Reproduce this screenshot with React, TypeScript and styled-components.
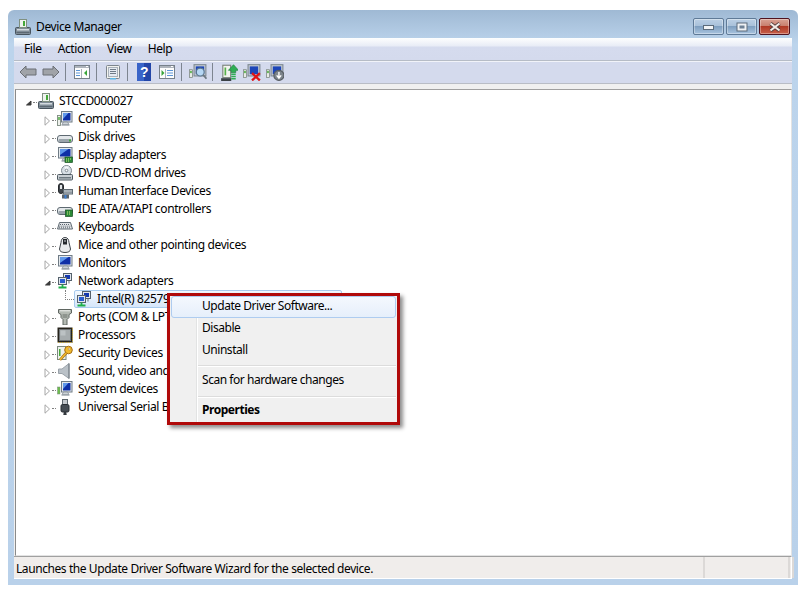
import React from "react";
import styled, { createGlobalStyle } from "styled-components";

const Global = createGlobalStyle`
  html, body {
    margin: 0;
    background: #fff;
    font-family: "Noto Sans", "Open Sans", sans-serif;
    font-size: 12px;
    letter-spacing: -0.38px;
    color: #000;
  }
`;

const Win = styled.div`
  width: 790px;
  height: 575px;
  margin: 10px 0 0 8px;
  padding: 0 6px 6px;
  box-sizing: border-box;
  display: flex;
  flex-direction: column;
  border-radius: 6px 6px 0 0;
  background: linear-gradient(180deg, #9fb9d4 0, #bcd4ec 34px, #b9d1ea 100%);
`;

const TitleBar = styled.div`
  height: 28px;
  flex: none;
  display: flex;
  align-items: center;
  gap: 5px;
  padding: 6px 2px 0 1px;
  box-sizing: border-box;
`;

const TitleText = styled.span`
  flex: 1;
  line-height: 16px;
`;

const Caption = styled.div`
  display: flex;
  gap: 2px;
  align-self: flex-start;
  margin-top: 2px;
`;

const CaptionBtn = styled.div<{ $close?: boolean }>`
  width: 31px;
  height: 17px;
  box-sizing: border-box;
  border-radius: 2px;
  display: flex;
  align-items: center;
  justify-content: center;
  border: 1px solid ${(p) => (p.$close ? "#50131f" : "#5f7a97")};
  box-shadow: inset 0 0 0 1px rgba(255, 255, 255, 0.35);
  background: ${(p) =>
    p.$close
      ? "linear-gradient(180deg, #d9a294 0, #c9806f 45%, #b03a26 50%, #c8604a 100%)"
      : "linear-gradient(180deg, #bcd0e5 0, #a9c1da 45%, #7f9fc0 50%, #a9c4df 100%)"};
`;

const Client = styled.div`
  flex: 1;
  display: flex;
  flex-direction: column;
  background: #f0f0f0;
  min-height: 0;
`;

const MenuBar = styled.div`
  height: 22px;
  flex: none;
  display: flex;
  padding-left: 2px;
  background: linear-gradient(180deg, #fdfefe 0, #e8ecf6 8px, #d5dbee 9px, #d4daed 100%);
  border-bottom: 1px solid #b6bcc6;
`;

const MenuEntry = styled.span`
  padding: 0 8px;
  line-height: 22px;
`;

const ToolBar = styled.div`
  height: 22px;
  flex: none;
  display: flex;
  align-items: center;
  padding-left: 2px;
  background: #d4daed;
  box-shadow: inset 0 1px 0 #f1f3f9;
  border-bottom: 1px solid #b9bdc6;
`;

const ToolSlot = styled.div`
  width: 23px;
  height: 22px;
  display: flex;
  align-items: center;
  justify-content: center;
`;

const ToolSep = styled.div`
  width: 1px;
  height: 18px;
  margin: 0 4px 0 3px;
  background: #7d8590;
`;

const TreePanel = styled.div`
  position: relative;
  flex: 1;
  margin: 5px 0 0 1px;
  padding-top: 2px;
  background: #fff;
  border-top: 1px solid #a0a0a0;
  border-left: 1px solid #8a8a8a;
  border-right: 1px solid #e3e3e3;
  border-bottom: 1px solid #e3e3e3;
`;

const Row = styled.div<{ $depth: number }>`
  height: 18px;
  display: flex;
  align-items: center;
  padding-left: ${(p) => 8 + p.$depth * 19}px;
`;

const Expander = styled.div`
  width: 8px;
  height: 18px;
  flex: none;
  display: flex;
  align-items: center;
  padding-top: 3px;
  box-sizing: border-box;
`;

const Dots = styled.div`
  width: 4px;
  margin: 2px 1px 0;
  flex: none;
  border-top: 1px dotted #808080;
`;

const Elbow = styled.div`
  position: absolute;
  left: 49px;
  top: 200px;
  width: 8px;
  height: 9px;
  border-left: 1px dotted #808080;
  border-bottom: 1px dotted #808080;
`;

const Label = styled.span`
  margin-left: 5px;
  line-height: 16px;
  white-space: nowrap;
`;

const Selected = styled.div`
  display: flex;
  align-items: center;
  height: 18px;
  width: 268px;
  margin-left: 12px;
  padding-left: 1px;
  box-sizing: border-box;
  border: 1px solid #a8cbee;
  border-radius: 2px;
  background: linear-gradient(180deg, #f4f9fe 0, #d6e6fa 100%);
`;

const Context = styled.div`
  position: absolute;
  left: 151px;
  top: 203px;
  width: 233px;
  height: 132px;
  box-sizing: border-box;
  border: 3px solid #b00a0a;
  padding: 0 1px;
  box-shadow: 3px 3px 4px rgba(0, 0, 0, 0.45);
  background: linear-gradient(90deg, #f0f0f0 0, #f0f0f0 26px, #e2e3e3 26px, #e2e3e3 27px, #fff 27px, #fff 28px, #f0f0f0 28px);
`;

const ContextItem = styled.div<{ $active?: boolean; $bold?: boolean }>`
  height: 22px;
  line-height: 18px;
  box-sizing: border-box;
  padding-left: 30px;
  border: 1px solid ${(p) => (p.$active ? "#aeccf0" : "transparent")};
  border-radius: 3px;
  letter-spacing: -0.46px;
  font-weight: ${(p) => (p.$bold ? 700 : 400)};
  background: ${(p) => (p.$active ? "linear-gradient(180deg, #f4f8fe 0, #e6effb 100%)" : "none")};
`;

const ContextSep = styled.div<{ $low?: boolean }>`
  margin: ${(p) => (p.$low ? "4px 0 2px 27px" : "3px 0 3px 27px")};
  height: 2px;
  box-sizing: border-box;
  border-top: 1px solid #dcdcdc;
  border-bottom: 1px solid #fff;
`;

const Status = styled.div`
  height: 21px;
  flex: none;
  display: flex;
  background: #f0edeb;
  border-top: 1px solid #a0a0a0;
  border-bottom: 1px solid #fff;
  border-right: 1px solid #fff;
`;

const StatusCell = styled.div<{ $w?: number }>`
  ${(p) => (p.$w ? `width: ${p.$w}px; flex: none;` : "flex: 1;")}
  padding-left: 2px;
  line-height: 23px;
  letter-spacing: -0.42px;
  border-right: 2px solid #dcd9d7;
  box-sizing: border-box;
`;

const Open = () => (
  <svg width="8" height="10" viewBox="0 0 8 10"><path d="M2 .8v8.400l4.500-4.200z" fill="#fff" stroke="#a6a6a6" /></svg>
);
const Shut = () => (
  <svg width="8" height="8" viewBox="0 0 8 8"><path d="M7 2v4H2.500z" fill="#3c3c3c" stroke="#3c3c3c" /></svg>
);

type IconProps = { size?: number };
const Ico = ({ children, size = 16 }: IconProps & { children: React.ReactNode }) => (
  <svg width={size} height={size} viewBox="0 0 16 16" style={{ flex: "none" }}>{children}</svg>
);

const Stack = () => (
  <>
    <rect x=".5" y="8.500" width="15" height="7" rx="1" fill="#7f8c97" stroke="#48545e" />
    <rect x="2" y="10" width="12" height="1.500" fill="#d3dadf" />
    <rect x="1.500" y="13" width="13" height="1" fill="#5c6872" />
    <rect x="4.500" y=".5" width="7" height="8" fill="#eef3ee" stroke="#7f9080" />
    <rect x="8" y="2" width="2" height="5" fill="#46a83a" />
  </>
);
const Screen = ({ small }: { small?: boolean }) => {
  const x = small ? 4 : 1;
  const w = small ? 11.500 : 14.500;
  return (
    <>
      <rect x={x + 0.5} y=".5" width={w - 1} height="10.500" fill="#e4e9ed" stroke="#6f7b85" />
      <rect x={x + 2} y="2" width={w - 4} height="7.500" fill="#0f2fa6" />
      <path d={`M${x + 2} 2h${w - 6}l-${w - 6} 6z`} fill="#5f97ea" />
      <path d="M6.500 11h4l1.500 2.500H5z" fill="#cdd3d8" stroke="#7e8890" strokeWidth=".7" />
      <rect x="4.500" y="13.500" width="8" height="1.200" fill="#9aa3aa" />
    </>
  );
};
const Tower = () => (
  <>
    <rect x=".5" y="4.500" width="3" height="10" fill="#eef1ec" stroke="#7d8a80" strokeWidth=".9" />
    <rect x="1.300" y="6" width="1.400" height="3" fill="#46a83a" />
  </>
);
const Board = () => (
  <>
    <rect x="8" y="10" width="7.500" height="5.500" fill="#2a8a36" stroke="#174f22" strokeWidth=".7" />
    <path d="M9 12h1m1 0h1m1 0h1M9 14h1m1 0h1" stroke="#d3e68a" />
  </>
);
const Drive = () => (
  <>
    <rect x=".5" y="6.500" width="15" height="7" rx="2.500" fill="#e3e7ea" stroke="#5f6a72" />
    <rect x="1.500" y="10" width="13" height="3" rx="1" fill="#9aa4ab" />
    <rect x="12" y="10.500" width="2" height="2" fill="#43a83a" />
  </>
);
const Net = () => (
  <>
    <rect x="6.500" y=".5" width="8" height="7" fill="#e0e6ec" stroke="#55616c" />
    <rect x="8" y="2" width="5" height="4" fill="#1338b0" />
    <rect x="1.500" y="4.500" width="8" height="7" fill="#e0e6ec" stroke="#55616c" />
    <rect x="3" y="6" width="5" height="4" fill="#2b5fd0" />
    <path d="M5.500 11.500v2.500M1.500 14.500h8" stroke="#1fb04a" strokeWidth="1.800" fill="none" />
    <path d="M12 7.500v3" stroke="#5d6a76" />
  </>
);

const icons: Record<string, React.ReactNode> = {
  root: <Stack />,
  computer: (<><Tower /><Screen small /></>),
  disk: <Drive />,
  display: (<><Screen /><Board /></>),
  dvd: (
    <>
      <circle cx="9.500" cy="5.500" r="5" fill="#d8dfe6" stroke="#7f8992" />
      <path d="M9.500 5.500L7 1.500h5z" fill="#f4f7fa" />
      <circle cx="9.500" cy="5.500" r="1.300" fill="#fff" stroke="#7f8992" />
      <rect x=".5" y="9.500" width="15" height="5.500" rx="1" fill="#c8ced3" stroke="#4f5a62" />
      <rect x="2" y="12" width="12" height="1.500" fill="#6f7a82" />
    </>
  ),
  hid: (
    <>
      <rect x="1.500" y=".5" width="5" height="10" rx="2.500" fill="#41474c" stroke="#25282b" />
      <rect x="3" y="2" width="2" height="4" fill="#e3e6e8" />
      <rect x="6.500" y="6.500" width="9" height="4.500" fill="#c8cfd5" stroke="#5f6a72" />
      <path d="M7.500 8h7M7.500 9.600h7" stroke="#4d5862" strokeDasharray="1 1" />
      <rect x="5" y="11.500" width="7" height="4" fill="#59636c" />
      <rect x="7.500" y="12" width="2" height="3.500" fill="#3f7fd0" />
    </>
  ),
  ide: (
    <>
      <Drive />
      <rect x="8.500" y="9" width="7" height="6.500" fill="#2a8a36" stroke="#174f22" strokeWidth=".7" />
      <path d="M10 11h1m1 0h1M10 13h1m1 0h1" stroke="#d3e68a" />
    </>
  ),
  keyboard: (
    <>
      <path d="M2.500 3.500h11l2 6.500H.5z" fill="#e3e6e9" stroke="#5f6a72" />
      <path d="M3 5.500h10M2.300 7.200h11.400M2 8.800h12" stroke="#5a646c" strokeDasharray="1 1" />
    </>
  ),
  mouse: (
    <>
      <path d="M8 .5c3 0 3.800 2.500 4 5l1.500 6.500c0 2.500-2.500 3.500-5.500 3.500s-5.500-1-5.500-3.500L4 5.500c.2-2.500 1-5 4-5z" fill="#e8eaec" stroke="#3d4349" />
      <path d="M6 2h4v5.500H6z" fill="#24282c" />
      <path d="M7.500 3h1v2h-1z" fill="#c8ced3" />
    </>
  ),
  monitor: <Screen />,
  network: <Net />,
  ports: (
    <>
      <path d="M1.500 .5h13v3.500l-2.500 1.500v3L10 10.500V16H6v-5.500L4 8.500v-3L1.500 4z" fill="#b4bab3" stroke="#5f6661" />
      <path d="M3 1.800h10" stroke="#eef1ee" />
      <path d="M5.500 6h5M5.500 8h5" stroke="#6a716b" />
    </>
  ),
  cpu: (
    <>
      <rect x=".5" y=".5" width="15" height="15" fill="#26231b" />
      <rect x="2.500" y="2.500" width="11" height="11" fill="#a6acae" stroke="#6d7274" />
      <rect x="3.500" y="3.500" width="5" height="5" fill="#bcc2c4" />
      <path d="M15.500 1v14.500H1" fill="none" stroke="#c4a63c" strokeDasharray="1 1" />
    </>
  ),
  security: (
    <>
      <rect x=".5" y="1.500" width="8.500" height="13" fill="#eef1ec" stroke="#7d8a80" />
      <rect x="2" y="4" width="1.500" height="7" fill="#46a83a" />
      <circle cx="11.500" cy="5" r="3.800" fill="#f2bb2e" stroke="#a36d14" />
      <circle cx="12.200" cy="4" r="1" fill="#fff" stroke="#a36d14" strokeWidth=".5" />
      <path d="M9.200 8L3 14.800" stroke="#a36d14" strokeWidth="2.600" />
      <path d="M9.200 8L3 14.800" stroke="#f2bb2e" strokeWidth="1.400" />
    </>
  ),
  sound: (
    <>
      <path d="M1.500 6h3.500L12 .5v15L5 10.500H1.500z" fill="#bac1c7" stroke="#9aa2a9" />
      <path d="M12 .5v15" stroke="#6f777e" />
    </>
  ),
  system: (
    <>
      <rect x=".5" y="6" width="2.500" height="7" fill="#6cc04a" stroke="#7d8a80" strokeWidth=".5" />
      <Screen small />
    </>
  ),
  usb: (
    <>
      <rect x="5.500" y=".5" width="5" height="5.500" fill="#c4c9cd" stroke="#5d666d" />
      <rect x="4" y="5.500" width="8" height="7.500" rx="1.500" fill="#454c53" stroke="#292e33" />
      <path d="M6.800 13h2.400l.5 3H6.300z" fill="#32383d" />
    </>
  ),
};

const Arrow = ({ dir }: { dir: "l" | "r" }) => (
  <svg width="18" height="14" viewBox="0 0 18 14">
    <path
      d={dir === "l" ? "M1 7l6-6v3h10v6H7v3z" : "M17 7l-6-6v3H1v6h10v3z"}
      fill="#a0a3a8"
      stroke="#6b6f75"
      strokeLinejoin="round"
    />
  </svg>
);

const PaneIcon = ({ flip }: { flip?: boolean }) => (
  <Ico>
    <rect x=".5" y="1.500" width="15" height="13" fill="#fdfdfd" stroke="#77808a" />
    <rect x="1" y="2" width="14" height="2" fill="#aeb4bc" />
    <path d="M12 2.500h2" stroke="#fff" />
    {flip ? (
      <>
        <path d="M6.500 5v9" stroke="#a9b1ba" />
        <path d="M2.500 6l3 3-3 3z" fill="#3aa53a" />
        <path d="M8 6.500h6M8 9h6M8 11.500h6" stroke="#5c95d6" />
      </>
    ) : (
      <>
        <path d="M2 6.500h4M2 9h4M2 11.500h4" stroke="#5c95d6" />
        <path d="M7.500 5v9" stroke="#a9b1ba" />
        <path d="M13 6l-3 3 3 3z" fill="#3aa53a" />
      </>
    )}
  </Ico>
);

const SheetIcon = () => (
  <Ico>
    <rect x="1.500" y="1.500" width="13" height="13" rx="1" fill="#f2f2ee" stroke="#7d858d" />
    <rect x="3.500" y="3.500" width="9" height="9" fill="#e6ebf2" stroke="#a9b1ba" />
    <path d="M5 5.500h6M5 7.500h6M5 9.500h6" stroke="#6f7a87" />
    <rect x="5" y="14" width="6" height="1.500" fill="#5fb7e6" />
  </Ico>
);

const HelpIcon = () => (
  <svg width="14" height="18" viewBox="0 0 14 18">
    <rect width="14" height="18" fill="#2346a8" />
    <rect x="0" y="0" width="7" height="18" fill="#3a64c8" />
    <text x="7" y="14" textAnchor="middle" fontSize="14" fontWeight="700" fill="#fff" fontFamily="Liberation Sans, sans-serif">?</text>
  </svg>
);

const ToolScreen = ({ children }: { children: React.ReactNode }) => (
  <Ico size={18}>
    <rect x=".5" y="6" width="2.500" height="7" fill="#e8ece6" stroke="#6f7a70" strokeWidth=".6" />
    <rect x="1" y="7" width="1.500" height="2" fill="#58b04a" />
    <rect x="4.500" y="1.500" width="10.500" height="10" fill="#c9ced3" stroke="#7e8a94" />
    <rect x="6" y="3" width="7.500" height="7" fill="#1d46b8" />
    {children}
  </Ico>
);

const ScanIcon = () => (
  <ToolScreen>
    <circle cx="10" cy="8" r="3.500" fill="#b6d7f4" stroke="#58758e" />
    <path d="M12.500 10.500L15.500 14" stroke="#6c7780" strokeWidth="1.500" />
  </ToolScreen>
);
const RemoveIcon = () => (
  <ToolScreen>
    <path d="M8 9l7 6.500M15 9l-7 6.500" stroke="#e01414" strokeWidth="2" />
  </ToolScreen>
);
const DownIcon = () => (
  <ToolScreen>
    <circle cx="11.500" cy="11" r="4.500" fill="#7d858c" stroke="#565c62" />
    <path d="M11.500 8v5M9.500 11l2 2.500 2-2.500" stroke="#fff" fill="none" strokeWidth="1.200" />
  </ToolScreen>
);
const UpdateIcon = () => (
  <Ico size={18}>
    <rect x="2.500" y="2" width="7" height="11" fill="#f2f4ee" stroke="#7c857c" />
    <rect x="4" y="4" width="1.500" height="7" fill="#58b04a" />
    <path d="M1 13.500h9v2.500H1z" fill="#3b4146" />
    <path d="M12 1.500l4.500 5H14v2h-4v-2H7.500z" fill="#2fae55" stroke="#1c7e3a" strokeWidth=".6" />
    <path d="M10 10h4M10 12h4M10 14h4" stroke="#2fae55" strokeWidth="1.200" />
  </Ico>
);

const Glyph = ({ kind }: { kind: string }) => <Ico>{icons[kind]}</Ico>;

const devices: { id: string; text: string; open?: boolean }[] = [
  { id: "computer", text: "Computer" },
  { id: "disk", text: "Disk drives" },
  { id: "display", text: "Display adapters" },
  { id: "dvd", text: "DVD/CD-ROM drives" },
  { id: "hid", text: "Human Interface Devices" },
  { id: "ide", text: "IDE ATA/ATAPI controllers" },
  { id: "keyboard", text: "Keyboards" },
  { id: "mouse", text: "Mice and other pointing devices" },
  { id: "monitor", text: "Monitors" },
  { id: "network", text: "Network adapters", open: true },
  { id: "ports", text: "Ports (COM & LPT)" },
  { id: "cpu", text: "Processors" },
  { id: "security", text: "Security Devices" },
  { id: "sound", text: "Sound, video and game controllers" },
  { id: "system", text: "System devices" },
  { id: "usb", text: "Universal Serial Bus controllers" },
];

const App = () => (
  <>
    <Global />
    <Win>
      <TitleBar>
        <Glyph kind="root" />
        <TitleText>Device Manager</TitleText>
        <Caption>
          <CaptionBtn>
            <svg width="12" height="6" viewBox="0 0 12 6"><rect x=".5" y="1.500" width="10" height="4" fill="#f2f4f6" stroke="#5c6b7a" /></svg>
          </CaptionBtn>
          <CaptionBtn>
            <svg width="12" height="10" viewBox="0 0 12 10"><rect x="1" y="1" width="10" height="8" fill="#eef1f4" stroke="#5c6b7a" /><rect x="3.500" y="3.500" width="5" height="3" fill="#6f8296" /></svg>
          </CaptionBtn>
          <CaptionBtn $close>
            <svg width="14" height="10" viewBox="0 0 14 10"><path d="M2.500 1.500l9 7M11.500 1.500l-9 7" stroke="#4d3a3a" strokeWidth="3.500" /><path d="M2.500 1.500l9 7M11.500 1.500l-9 7" stroke="#f3ebe6" strokeWidth="2.200" /></svg>
          </CaptionBtn>
        </Caption>
      </TitleBar>
      <Client>
        <MenuBar>
          <MenuEntry>File</MenuEntry>
          <MenuEntry>Action</MenuEntry>
          <MenuEntry>View</MenuEntry>
          <MenuEntry>Help</MenuEntry>
        </MenuBar>
        <ToolBar>
          <ToolSlot><Arrow dir="l" /></ToolSlot>
          <ToolSlot><Arrow dir="r" /></ToolSlot>
          <ToolSep />
          <ToolSlot><PaneIcon /></ToolSlot>
          <ToolSep />
          <ToolSlot><SheetIcon /></ToolSlot>
          <ToolSep />
          <ToolSlot><HelpIcon /></ToolSlot>
          <ToolSlot><PaneIcon flip /></ToolSlot>
          <ToolSep />
          <ToolSlot><ScanIcon /></ToolSlot>
          <ToolSep />
          <ToolSlot><UpdateIcon /></ToolSlot>
          <ToolSlot><RemoveIcon /></ToolSlot>
          <ToolSlot><DownIcon /></ToolSlot>
        </ToolBar>
        <TreePanel>
          <Row $depth={0}>
            <Expander><Shut /></Expander>
            <Dots />
            <Glyph kind="root" />
            <Label>STCCD000027</Label>
          </Row>
          {devices.map((d) => (
            <React.Fragment key={d.id}>
              <Row $depth={1}>
                <Expander>{d.open ? <Shut /> : <Open />}</Expander>
                <Dots />
                <Glyph kind={d.id} />
                <Label>{d.text}</Label>
              </Row>
              {d.open && (
                <Row $depth={2}>
                  <Selected>
                    <Glyph kind="network" />
                    <Label>Intel(R) 82579LM Gigabit Network Connection</Label>
                  </Selected>
                </Row>
              )}
            </React.Fragment>
          ))}
          <Elbow />
          <Context>
            <ContextItem $active>Update Driver Software...</ContextItem>
            <ContextItem>Disable</ContextItem>
            <ContextItem>Uninstall</ContextItem>
            <ContextSep />
            <ContextItem>Scan for hardware changes</ContextItem>
            <ContextSep $low />
            <ContextItem $bold>Properties</ContextItem>
          </Context>
        </TreePanel>
        <Status>
          <StatusCell $w={691}>Launches the Update Driver Software Wizard for the selected device.</StatusCell>
          <StatusCell $w={85} />
          <StatusCell />
        </Status>
      </Client>
    </Win>
  </>
);

export default App;
